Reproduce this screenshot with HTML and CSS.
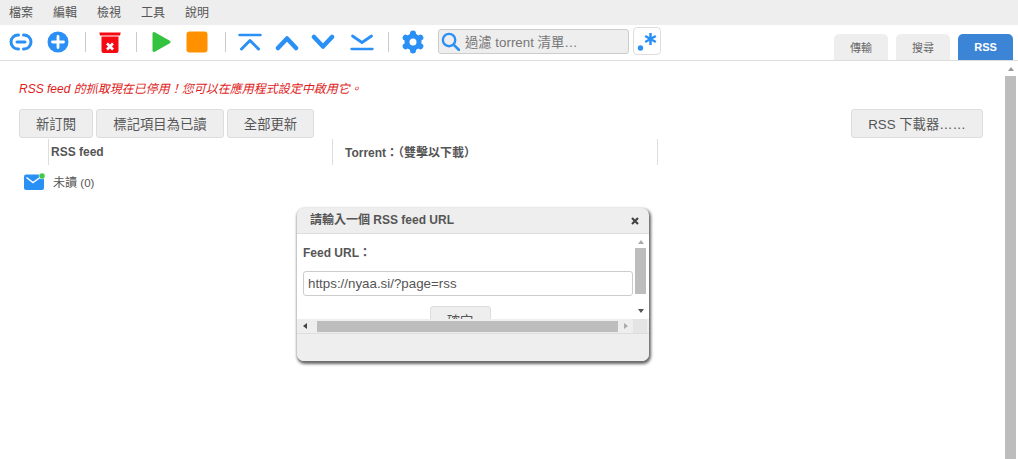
FILE: index.html
```html
<!DOCTYPE html>
<html lang="zh-Hant">
<head>
<meta charset="utf-8">
<title>qBittorrent</title>
<link rel="stylesheet" href="styles.css">
</head>
<body>
<nav class="menubar">
  <span class="menu-item">檔案</span><span class="menu-item">編輯</span><span class="menu-item">檢視</span><span class="menu-item">工具</span><span class="menu-item">說明</span>
</nav>
<header class="toolbar">
  <svg class="ic ic-link" viewBox="0 0 24 24"><path d="M9.500 5H9a7 7 0 0 0 0 14h.5M14.500 5h.5a7 7 0 0 1 0 14h-.5" fill="none" stroke="#2b90f5" stroke-width="3" stroke-linecap="round"/><path d="M8 12h8" stroke="#2b90f5" stroke-width="3" stroke-linecap="round"/></svg>
  <svg class="ic ic-add" viewBox="0 0 24 24"><circle cx="12" cy="12" r="10.500" fill="#2b90f5"/><path d="M12 6.500v11M6.500 12h11" stroke="#fff" stroke-width="2.800" stroke-linecap="round"/></svg>
  <span class="sep sep-a"></span>
  <svg class="ic ic-del" viewBox="0 0 24 24"><path d="M1.300 2.500h21.400l-.7 3H2z" fill="#f50a14"/><path d="M3.500 6.500h17V21a2 2 0 0 1-2 2h-13a2 2 0 0 1-2-2z" fill="#f50a14"/><path d="M9 13.500l6 6M15 13.500l-6 6" stroke="#fff" stroke-width="2.600"/></svg>
  <span class="sep sep-b"></span>
  <svg class="ic ic-play" viewBox="0 0 24 24"><path d="M3.500 3.500v17a1.500 1.500 0 0 0 2.300 1.300l15-8.500a1.500 1.500 0 0 0 0-2.600l-15-8.500a1.500 1.500 0 0 0-2.300 1.300z" fill="#33c33f"/></svg>
  <svg class="ic ic-stop" viewBox="0 0 24 24"><rect x="1.500" y="1.500" width="21" height="21" rx="3" fill="#ff9100"/></svg>
  <span class="sep sep-c"></span>
  <svg class="ic ic-top" viewBox="0 0 24 24"><path d="M1.500 5h21" stroke="#2b90f5" stroke-width="2.500" stroke-linecap="round"/><path d="M3.500 19L12 10.500l8.500 8.500" fill="none" stroke="#2b90f5" stroke-width="3" stroke-linecap="round" stroke-linejoin="round"/></svg>
  <svg class="ic ic-up" viewBox="0 0 24 24"><path d="M3 18l9-9.500 9 9.500" fill="none" stroke="#2b90f5" stroke-width="4.500" stroke-linecap="round" stroke-linejoin="round"/></svg>
  <svg class="ic ic-down" viewBox="0 0 24 24"><path d="M3 7l9 9.500L21 7" fill="none" stroke="#2b90f5" stroke-width="4.500" stroke-linecap="round" stroke-linejoin="round"/></svg>
  <svg class="ic ic-bottom" viewBox="0 0 24 24"><path d="M2.500 6l9.500 6.500L21.500 6" fill="none" stroke="#2b90f5" stroke-width="2.800" stroke-linecap="round" stroke-linejoin="round"/><path d="M1.500 19h21" stroke="#2b90f5" stroke-width="2.300" stroke-linecap="round"/></svg>
  <span class="sep sep-d"></span>
  <svg class="ic ic-gear" viewBox="0 0 24 24"><circle cx="12" cy="12" r="8.500" fill="#2b90f5"/><path d="M12 3.500v17M4.640 7.750l14.720 8.500M19.360 7.750L4.640 16.250" stroke="#2b90f5" stroke-width="6" stroke-linecap="round"/><circle cx="12" cy="12" r="3.500" fill="#fff"/></svg>
  <label class="search">
    <svg class="ic-search" viewBox="0 0 20 20"><circle cx="8.500" cy="8.500" r="6.500" fill="none" stroke="#2b90f5" stroke-width="2.500"/><path d="M13.500 13.500l5.500 5.500" stroke="#2b90f5" stroke-width="2.800" stroke-linecap="round"/></svg>
    <span class="search-text">過濾 torrent 清單…</span>
  </label>
  <button class="regex"><svg viewBox="0 0 22 22" class="ic-regex"><circle cx="4.500" cy="18" r="2.700" fill="#2b90f5"/><path d="M14.500 3v12M9.200 6l10.600 6M19.800 6L9.200 12" stroke="#2b90f5" stroke-width="2.500"/></svg></button>
  <div class="tabs">
    <span class="tab">傳輸</span><span class="tab">搜尋</span><span class="tab tab-active">RSS</span>
  </div>
</header>
<div class="page">
  <main class="content">
    <p class="warning">RSS feed 的抓取現在已停用！您可以在應用程式設定中啟用它。</p>
    <div class="actions">
      <button class="btn btn-new">新訂閱</button>
      <button class="btn btn-mark">標記項目為已讀</button>
      <button class="btn btn-update">全部更新</button>
      <button class="btn btn-dl">RSS 下載器……</button>
    </div>
    <div class="thead">
      <span class="th th-feed">RSS feed</span>
      <span class="th th-torrent">Torrent：（雙擊以下載）</span>
      <span class="th-end"></span>
    </div>
    <div class="feed-row">
      <svg class="mail" viewBox="0 0 22 17"><rect x="1" y="1.500" width="20" height="15.500" rx="2" fill="#2b90f5"/><path d="M3.500 4.500L10 9.500l7-5" fill="none" stroke="#fff" stroke-width="1.500"/><circle cx="19" cy="3" r="3" fill="#3ec94a" stroke="#fff" stroke-width=".5"/></svg>
      <span class="feed-name">未讀 <small>(0)</small></span>
    </div>
  </main>
  <aside class="vscroll">
    <span class="arrow-up"></span>
    <span class="vthumb"></span>
  </aside>
</div>
<section class="dialog">
  <div class="dlg-title"><span>請輸入一個 RSS feed URL</span><svg class="dlg-close" viewBox="0 0 8 8"><path d="M1 1l6 6M7 1L1 7" stroke="#444" stroke-width="2.200"/></svg></div>
  <div class="dlg-view">
    <div class="dlg-main">
      <div class="dlg-body">
        <div class="dlg-label">Feed URL：</div>
        <div class="dlg-input">https://nyaa.si/?page=rss</div>
        <div class="dlg-btn-wrap"><button class="dlg-ok">確定</button></div>
      </div>
      <div class="dlg-vbar">
        <span class="arrow-up arrow-dlg"></span>
        <span class="dlg-vthumb"></span>
        <span class="arrow-down"></span>
      </div>
    </div>
    <div class="dlg-hbar">
      <span class="arrow-left"></span>
      <span class="dlg-hthumb"></span>
      <span class="arrow-right"></span>
      <span class="dlg-corner"></span>
    </div>
  </div>
  <div class="dlg-foot"></div>
</section>
</body>
</html>
```
FILE: styles.css
```css
* { box-sizing: border-box; }
html, body { margin: 0; height: 100%; overflow: hidden; background: #fff; }
body { font-family: "Liberation Sans", "Noto Sans CJK SC", sans-serif; color: #555; font-size: 12px; }

.menubar { height: 25px; background: #eee; display: flex; align-items: center; padding: 0 0 3px 9px; gap: 20px; font-size: 12px; color: #555; }

.toolbar { height: 36px; display: flex; align-items: center; padding-left: 9px; border-bottom: 1px solid #ddd; }
.ic { width: 24px; height: 24px; flex: none; margin-top: -1px; }
.ic-add { margin-left: 13px; }
.sep { width: 1px; height: 20px; background: #ccc; flex: none; margin-top: -1px; }
.sep-a { margin-left: 15px; }
.ic-del { margin-left: 12px; }
.sep-b { margin-left: 14px; }
.ic-play { margin-left: 12px; }
.ic-stop { margin-left: 12px; }
.sep-c { margin-left: 16px; }
.ic-top { margin-left: 12px; }
.ic-up { margin-left: 13px; }
.ic-down { margin-left: 12px; }
.ic-bottom { margin-left: 15px; }
.sep-d { margin-left: 14px; }
.ic-gear { margin-left: 12px; }

.search { margin-left: 13px; margin-top: -3px; width: 191px; height: 25px; background: #eee; border: 1px solid #ccc; border-radius: 3px; display: flex; align-items: center; padding-left: 2px; }
.ic-search { width: 19px; height: 19px; flex: none; }
.search-text { margin-left: 5px; font-size: 13.333px; color: #777; white-space: nowrap; }
.regex { margin-left: 4px; margin-top: -3px; width: 28px; height: 28px; padding: 0; background: #fff; border: 1px solid #ddd; border-radius: 4px; display: flex; align-items: center; justify-content: center; }
.ic-regex { width: 22px; height: 22px; }

.tabs { margin-left: auto; margin-right: 5px; display: flex; gap: 8px; align-self: flex-end; }
.tab { width: 54px; height: 26px; background: #eee; border-radius: 5px 5px 0 0; display: flex; align-items: center; justify-content: center; font-size: 11px; color: #666; font-weight: normal; }
.tab-active { width: 55px; background: #3c85d6; color: #fff; font-weight: bold; }

.page { display: flex; height: 398px; }
.content { flex: 1; min-width: 0; padding: 21px 22px 0 19px; }
.warning { margin: 0; font-size: 12px; line-height: 15px; height: 15px; font-style: italic; color: #e01b1b; white-space: nowrap; }
.actions { display: flex; margin-top: 12px; gap: 3px; }
.btn { height: 29px; padding: 0 0 1px; background: #eee; border: 1px solid #ddd; border-radius: 3px; color: #555; font: 13.333px "Liberation Sans", "Noto Sans CJK SC", sans-serif; }
.btn-new { width: 74px; }
.btn-mark { width: 128px; }
.btn-update { width: 87px; }
.btn-dl { width: 132px; margin-left: auto; }

.thead { display: flex; margin-top: 1px; height: 26px; padding-left: 29px; }
.th { border-left: 1px solid #ddd; display: flex; align-items: center; font-weight: bold; font-size: 12px; color: #555; }
.th-feed { width: 284px; padding-left: 2px; }
.th-torrent { width: 325px; padding-left: 12px; padding-bottom: 2px; }
.th-end { border-left: 1px solid #ddd; }

.feed-row { display: flex; align-items: center; margin-top: 7px; padding-left: 4px; height: 18px; }
.mail { width: 22px; height: 17px; flex: none; }
.feed-name { margin-left: 8px; font-size: 12px; color: #555; }
.feed-name small { font-size: 11.500px; }

.vscroll { width: 12px; margin-right: 1px; padding-right: 1px; display: flex; flex-direction: column; align-items: center; padding-top: 6px; }
.vthumb { width: 11px; flex: 1; margin-top: 5px; background: #bdbdbd; }
.arrow-up { width: 0; height: 0; border: 3.500px solid transparent; border-top: 0; border-bottom: 4px solid #9a9a9a; flex: none; }
.arrow-down { width: 0; height: 0; border: 3.500px solid transparent; border-bottom: 0; border-top: 4px solid #555; flex: none; margin-top: auto; margin-bottom: 6px; }
.arrow-left { width: 0; height: 0; border: 3.500px solid transparent; border-left: 0; border-right: 4px solid #444; flex: none; margin-left: 6px; }
.arrow-right { width: 0; height: 0; border: 3.500px solid transparent; border-right: 0; border-left: 4px solid #aaa; flex: none; margin-left: 6px; }

.dialog { position: absolute; left: 297px; top: 208px; width: 352px; height: 153px; background: #eee; border-radius: 7px; box-shadow: 1px 2px 3px 1px rgba(0,0,0,.6); display: flex; flex-direction: column; overflow: hidden; }
.dlg-title { height: 26px; flex: none; display: flex; align-items: center; justify-content: space-between; padding: 0 10px 4px 13px; font-weight: bold; font-size: 12px; color: #555; border-bottom: 1px solid #ddd; }
.dlg-close { width: 8px; height: 8px; margin-top: 5px; }
.dlg-view { height: 100px; flex: none; display: flex; flex-direction: column; background: #fff; }
.dlg-main { flex: 1; min-height: 0; display: flex; overflow: hidden; padding-right: 2px; }
.dlg-body { flex: 1; min-width: 0; padding: 11px 1px 0 6px; overflow: hidden; }
.dlg-label { font-weight: bold; font-size: 12px; line-height: 16px; color: #555; }
.dlg-input { margin-top: 10px; height: 25px; border: 1px solid #ccc; border-radius: 3px; padding-left: 4px; display: flex; align-items: center; font-size: 13.333px; color: #555; }
.dlg-btn-wrap { display: flex; justify-content: center; margin-top: 10px; padding-right: 16px; }
.dlg-ok { width: 61px; height: 29px; flex: none; padding: 0; background: #eee; border: 1px solid #ddd; border-radius: 3px; color: #555; font: 13.333px "Liberation Sans", "Noto Sans CJK SC", sans-serif; }
.dlg-vbar { width: 13px; flex: none; display: flex; flex-direction: column; align-items: center; padding-top: 6px; }
.dlg-vthumb { width: 11px; height: 46px; margin-top: 4px; background: #bdbdbd; flex: none; }
.arrow-dlg { border-bottom-color: #aaa; }
.dlg-hbar { height: 15px; flex: none; display: flex; align-items: center; background: #eee; border-bottom: 1px solid #ddd; }
.dlg-hthumb { width: 301px; height: 11px; margin-left: 10px; background: #bdbdbd; flex: none; }
.dlg-corner { margin-left: auto; margin-right: 2px; width: 14px; height: 14px; background: #e4e4e4; }
.dlg-foot { flex: 1; background: #eee; }
```
